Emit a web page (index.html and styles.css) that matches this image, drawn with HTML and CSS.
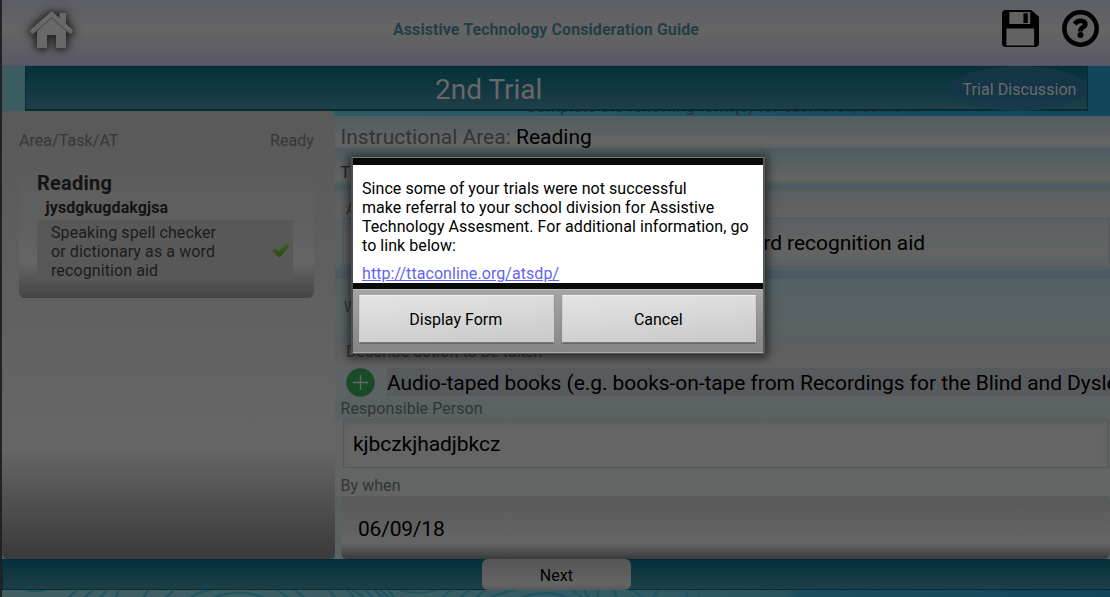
FILE: index.html
```
<!DOCTYPE html>
<html lang="en">
<head>
<meta charset="utf-8">
<title>Assistive Technology Consideration Guide</title>
<link rel="stylesheet" href="styles.css">
</head>
<body>
<div class="app">
  <header class="header">
    <svg class="home" width="64" height="64" viewBox="0 0 64 64">
      <g class="home-shape">
        <path d="M39.500 13h6.500v12l-6.500-5z"/>
        <path d="M17 28.500 31.700 16 46 28.500V48H36V35h-9v13H17z"/>
        <path class="home-roof" d="M12.500 31 31.700 14 50.500 31"/>
      </g>
    </svg>
    <h1 class="app-title">Assistive Technology Consideration Guide</h1>
    <div class="tools">
      <svg width="37" height="37" viewBox="0 0 38 38">
        <path fill="#000" d="M4 0h26l8 7v27a4 4 0 0 1-4 4H4a4 4 0 0 1-4-4V4a4 4 0 0 1 4-4z"/>
        <path fill="#636363" d="M7.500 2H29v12.500H7.500zM4.500 19h28.500v17.500H4.500z"/>
        <path fill="#000" d="M22 3.300h4.500v10H22z"/>
      </svg>
      <svg width="37" height="37" viewBox="0 0 38 38">
        <circle cx="19" cy="19" r="16.600" fill="none" stroke="#000" stroke-width="4.600"/>
        <path fill="none" stroke="#000" stroke-width="4.800" d="M13 14.300C15 11.800 18 11 20.500 11.300c4 .5 4.500 4 1.500 6-2 1.400-3.200 2-3.200 4.700"/>
        <circle cx="19" cy="25.700" r="3.100"/>
      </svg>
    </div>
  </header>

  <div class="titlebar-row">
    <div class="titlebar">
      <span class="trial">2nd Trial</span>
      <span class="discussion">Trial Discussion</span>
    </div>
  </div>

  <main class="main">
    <aside class="sidebar">
      <div class="side-head"><span>Area/Task/AT</span><span>Ready</span></div>
      <section class="area">
        <h2 class="area-name">Reading</h2>
        <h3 class="task-name">jysdgkugdakgjsa</h3>
        <div class="at">
          <p class="at-text">Speaking spell checker or dictionary as a word recognition aid</p>
          <svg width="18" height="15" viewBox="0 0 18 15">
            <defs><linearGradient id="tick" x1="0" y1="0" x2="0" y2="1"><stop offset="0" stop-color="#44632a"/><stop offset="1" stop-color="#2b4512"/></linearGradient></defs>
            <path fill="url(#tick)" d="M0 8 3.500 5 7 8 14.500 0 18 3 7.500 14.500z"/>
          </svg>
        </div>
      </section>
    </aside>

    <div class="form">
      <div class="hint">Complete the following form(s) for each area/domain.</div>
      <div class="row instructional">Instructional Area: <b>Reading</b></div>
      <div class="row task">Task: jysdgkugdakgjsa</div>
      <div class="row at-label">AT</div>
      <div class="box at-box">Speaking spell checker or dictionary as a word recognition aid</div>
      <div class="gap"></div>
      <div class="row why">Was it successful?</div>
      <div class="row describe">Describe action to be taken</div>
      <div class="action">
        <svg width="29" height="29" viewBox="0 0 29 29">
          <circle cx="14.500" cy="14.500" r="14.300" fill="#1b4a28"/>
          <path d="M14.500 7v15M7 14.500h15" stroke="#5c6b61" stroke-width="1.400"/>
        </svg>
        <span class="action-text">Audio-taped books (e.g. books-on-tape from Recordings for the Blind and Dyslexic)</span>
      </div>
      <div class="row person">Responsible Person</div>
      <div class="box person-box">kjbczkjhadjbkcz</div>
      <div class="row when">By when</div>
      <div class="date">06/09/18</div>
    </div>
  </main>

  <footer class="footer"><span class="next">Next</span></footer>
  <svg class="waves" width="1108" height="7" viewBox="0 0 1108 7">
    <g fill="none" stroke="#1c5666" stroke-width="2">
      <path d="M25 0q9 2.500 18 0M66 8l9-8M82 8l9-8M98 8l7-8M113 8l4-8M141 8l5-8M163 8l9-8M188 8q9-7 21-8M209 9q28-13 56 0M275 0l12 8M293 0l10 8M327 0l7 8M346 0l6 8M363 0l8 8M378 0l10 8M350 0l14 8M372 0l10 8M398 0q18 6 36 0M386 0l7 8M440 8l9-8M458 8l9-8M474 8l9-8M488 8q11-6 25-8M518 8q28-10 48 0M570 0l11 8M582 0l5 8M596 0v8M612 0l3 8M630 0l12 8M650 8l7-8M684 8l3-8M696 8l2-8"/>
    </g>
  </svg>
</div>

<div class="overlay">
  <div class="dialog">
    <div class="message">
      <p class="message-text">Since some of your trials were not successful<br>make referral to your school division for Assistive<br>Technology Assesment. For additional information, go<br>to link below:</p>
      <a class="link">http://ttaconline.org/atsdp/</a>
    </div>
    <div class="buttons">
      <button class="btn">Display Form</button>
      <button class="btn">Cancel</button>
    </div>
  </div>
</div>
</body>
</html>
```
FILE: styles.css
```
* { box-sizing: border-box; }
body { margin: 0; width: 1110px; height: 597px; overflow: hidden; background: #222; font: 16px/19px Roboto, sans-serif; letter-spacing: .055px; color: #000; }
h1, h2, h3, p { margin: 0; }
svg { display: block; flex: none; }

.app { height: 597px; margin-left: 2px; display: flex; flex-direction: column; overflow: hidden; background: linear-gradient(90deg, #3c5c62, #2c5964 45%, #11475a 85%); }

.header { height: 66px; flex: none; display: flex; align-items: flex-start; justify-content: space-between; background: linear-gradient(#5d5e65, #616166 25%, #656564 46%, #5f5f64 72%, #5a5965); border-bottom: 1px solid #4f5562; }
.home { margin-left: 18px; }
.home-shape { fill: #686868; filter: drop-shadow(0 0 4px #222) drop-shadow(0 1px 3px #333); }
.home-roof { fill: none; stroke: #686868; stroke-width: 4.5; stroke-linecap: round; stroke-linejoin: miter; filter: drop-shadow(0 1px 0 #444); }
.app-title { margin-top: 20px; font-size: 16px; line-height: 19px; font-weight: 700; letter-spacing: .07px; color: #233d48; padding-left: 6px; }
.tools { display: flex; gap: 23px; padding: 10px 11px 0 0; }

.titlebar-row { height: 45px; flex: none; padding: 0 22px 0 23px; }
.titlebar { height: 45px; display: flex; align-items: center; justify-content: space-between; background: linear-gradient(#04323c, #123740 50%, #1f3f49); border: 1px solid #052b35; border-bottom-width: 2px; }
.trial { font-size: 28px; line-height: 42px; letter-spacing: 0; color: #686868; padding: 3px 0 0 409px; }
.discussion { width: 136px; height: 45px; line-height: 47px; padding-left: 1px; text-align: center; border-radius: 50%; background: linear-gradient(#143646, #163547 60%, #173c4c); color: #6a6c6e; }

.main { height: 448px; flex: none; display: flex; overflow: hidden; }
.sidebar { width: 333px; flex: none; padding: 20px 21px 0 17px; border-radius: 6px; background: linear-gradient(#595959, #666 75%, #3a3a3a); }
.side-head { display: flex; justify-content: space-between; color: #373737; line-height: 20px; }
.area { height: 137px; margin-top: 10px; padding: 10px 21px 0 18px; border-radius: 6px; background: linear-gradient(#5a5a5a00, #606060 50%, #656565 74%, #444); color: #1c1c1c; }
.area-name { font-size: 20px; line-height: 24px; font-weight: 700; letter-spacing: .25px; color: #141414; }
.task-name { margin: 3px 0 0 8.5px; font-size: 16px; line-height: 19px; font-weight: 700; letter-spacing: .1px; color: #141414; }
.at { height: 60px; margin-top: 3px; padding: 3px 3px 0 14px; display: flex; justify-content: space-between; background: #585858; }
.at svg { margin-top: 20px; }
.at-text { width: 177px; letter-spacing: .1px; }

.form { width: 775px; flex: none; display: flex; flex-direction: column; overflow: hidden; background: #596163; white-space: nowrap; }
.form > * { flex: none; }
.hint { height: 5px; padding-left: 191px; line-height: 19px; letter-spacing: .2px; display: flex; align-items: flex-end; background: linear-gradient(90deg, #2c5964, #285867 30%, #174d60 65%, #11475a); color: #222f37; font-size: 16px; overflow: hidden; }
.row { padding-left: 5.5px; font-size: 16px; color: #303436; }
.row b { font-weight: 400; color: #000; }
.instructional { height: 32px; font-size: 21px; line-height: 42px; letter-spacing: 0; color: #333; background: linear-gradient(#515d60, #5c6062 50%, #656565 82%, #5e6163); }
.task { height: 42px; line-height: 49px; font-kerning: none; letter-spacing: .8px; color: #1c2022; background: linear-gradient(#4d5c62, #525e61 14%, #5d6063 50%, #656464 75%, #56605f 83%, #4c5b61 90%, #4d5c61); }
.at-label { height: 28px; padding-left: 11px; line-height: 37px; background: linear-gradient(#5b5d5f, #626263 80%, #5d6063); }
.box { width: 766px; height: 49px; margin-left: 8px; padding-left: 9px; font-size: 21px; line-height: 49px; letter-spacing: -.05px; border: 1px solid #515a5c; }
.at-box { background: linear-gradient(#5b6062, #646464 70%, #5c6062); }
.gap { height: 12px; background: linear-gradient(#535f62, #4b5a60 45%, #4c5b60); }
.why { height: 55px; padding-left: 9px; line-height: 56px; font-size: 14px; background: linear-gradient(#566063, #596163); }
.describe { height: 34px; padding-left: 11px; line-height: 35px; font-size: 16px; letter-spacing: .12px; background: linear-gradient(#5b5d5f, #626161); }
.action { height: 30px; padding-left: 11px; display: flex; background: #5d6264; }
.action-text { margin-left: 12px; flex: 1; height: 28px; background: #585b5e; font-size: 21px; line-height: 30px; letter-spacing: -.06px; overflow: hidden; }
.person { height: 21px; line-height: 21px; background: linear-gradient(#5a6264, #5b6163); }
.person-box { border-color: #555857; background: #656565; box-shadow: inset 0 3px 4px #5c5c5c, 0 0 0 8px #616464; clip-path: inset(0 -8px 0 -8px); }
.when { height: 28px; line-height: 35px; background: linear-gradient(#626565, #636464); color: #323434; }
.date { margin-left: 6px; height: 63px; padding-left: 17px; border-radius: 6px; background: linear-gradient(#595959, #636363 65%, #656565 75%, #3a3a3a); font-size: 21px; line-height: 67px; letter-spacing: -.2px; }

.footer { height: 31px; flex: none; display: flex; padding-left: 480px; background: linear-gradient(#04323c, #123740 50%, #1f3f49); border: solid #052b35; border-width: 1px 0 1px 1px; }
.next { width: 149px; height: 31px; margin: -1px 0 0 -1px; border-radius: 6px; background: linear-gradient(#565656, #5c5c5c 40%, #656565 80%, #575757); text-align: center; line-height: 33px; }
.waves { background: linear-gradient(90deg, #416063, #3a5d63 40%, #305b64 60%, #27525f 71%, #1a4d5d 72%, #11475a); }

/* Modal dialog above the dimmed page */
.overlay { position: absolute; left: 351px; top: 157px; }
.dialog { width: 414px; height: 197px; border: 2px solid #555958; border-top: 1px solid #777; border-left-color: #4b4f4f; box-shadow: 0 1px 9px 3px rgba(0,0,0,.55); background: #0a0a0a; padding-top: 7px; display: flex; flex-direction: column; }
.message { height: 118px; padding: 14px 9px 0; background: #fff; }
.message-text { white-space: nowrap; }
.link { display: block; margin-top: 9px; line-height: 19px; letter-spacing: .07px; color: #6464f5; text-decoration: underline; }
.buttons { margin-top: 6px; flex: 1; padding: 5px 7px 9px 6px; display: flex; gap: 8px; background: linear-gradient(#a5a5a5, #858585); border-top: 1px solid #bbb; border-bottom: 1px solid #aaa; }
.btn { flex: 1; height: 48px; padding: 0 1px 0 0; border: 1px solid #d0d0d0; border-top-color: #f2f2f2; border-bottom-color: #777; border-radius: 1px; background: linear-gradient(175deg, #e4e4e4, #c9c9c9); box-shadow: 0 1px 1px #666; font: 16px Roboto, sans-serif; color: #000; }
```
